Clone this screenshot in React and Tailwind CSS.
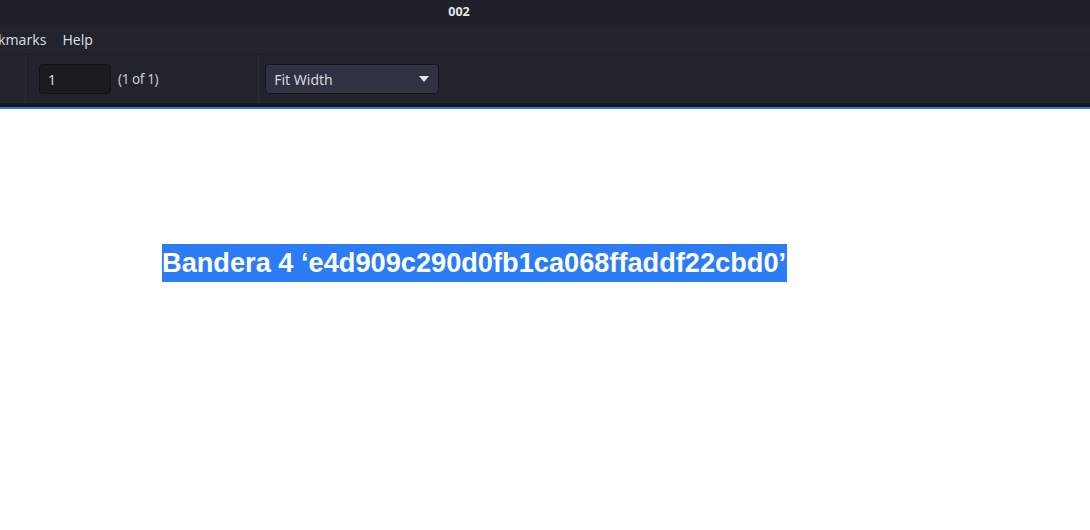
const App = () => {
  return (
    <div className="w-[1090px] h-[530px] relative bg-white overflow-hidden flex flex-col font-['Noto_Sans',sans-serif]">
      <div className="bg-[#22242d] flex flex-col">
        <div className="h-[25px] flex items-center bg-[#1f2029]">
          <div className="w-[459px] shrink-0" />
          <span className="text-[12.5px] font-bold text-[#e6e8ec] -translate-x-1/2 leading-none">002</span>
        </div>
        <div className="h-[30px] flex items-center gap-4 text-[14px] text-[#d4d7de] -ml-[2px] border-b border-[#1d1f26]">
          <span>kmarks</span>
          <span>Help</span>
        </div>
        <div className="h-[48px] flex items-center text-[14px] text-[#c5c9d2]">
          <div className="w-[26px] h-full flex items-center border-r border-[#292b35] overflow-hidden">
            <span className="-ml-[5px] text-[#7b7f8a]">t</span>
          </div>
          <div className="ml-[13px] w-[72px] h-[30px] rounded-[4px] bg-[#1a1b21] border border-[#111216] flex items-center pl-[8px] text-[#d4d7de]">1</div>
          <span className="ml-[7px] text-[13.5px] tracking-[-0.4px]">(1 of 1)</span>
          <div className="ml-[100px] w-px h-full bg-[#292b35]" />
          <div className="ml-[6px] w-[174px] h-[30px] rounded-[4px] bg-[#2f3240] border border-[#131419] flex items-center justify-between pl-[8px] pr-[9px] text-[#d4d7de]">
            <span>Fit Width</span>
            <svg width="10" height="6" viewBox="0 0 10 6"><path d="M0 0h10L5 6z" fill="#e4e6ea" /></svg>
          </div>
        </div>
      </div>
      <div className="h-[4px] bg-[#16171b]" />
      <div className="h-[2px] bg-[#2a7ee6]" />
      <div className="flex-1 pt-[135px] pl-[162px]">
        <span className="inline-block bg-[#2c7cf6] text-white font-bold text-[27.2px] leading-[38px] font-['Liberation_Sans',Arial,sans-serif] pr-[1px]">
          Bandera 4 ‘e4d909c290d0fb1ca068ffaddf22cbd0’
        </span>
      </div>
    </div>
  );
};

export default App;
